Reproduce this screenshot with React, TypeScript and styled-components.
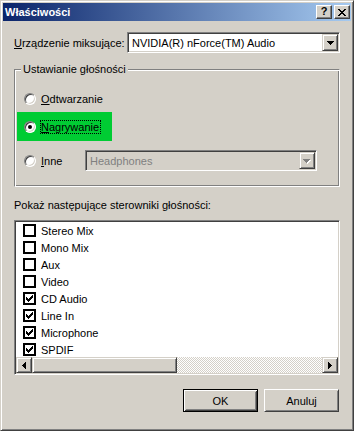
import styled, { createGlobalStyle } from "styled-components";
import type { ReactElement } from "react";

const GlobalStyle = createGlobalStyle`
    html, body {
        margin: 0;
        padding: 0;
        background: #d4d0c8;
    }
    body {
        font-family: "Liberation Sans", Arial, sans-serif;
        font-size: 11px;
        color: #000;
    }
`;

const CHECK = ["......#", ".....##", "#...###", "##.###.", "#####..", ".###...", "..#...."];
const CLOSE = ["##....##", ".##..##.", "..####..", "...##...", "..####..", ".##..##.", "##....##"];
const ARROW_DOWN = ["#######", ".#####.", "..###..", "...#..."];
const ARROW_LEFT = ["...#", "..##", ".###", "####", ".###", "..##", "...#"];
const ARROW_RIGHT = ["#...", "##..", "###.", "####", "###.", "##..", "#..."];

const PixelIcon = (props: { rows: string[]; color?: string; shadow?: string }) => {
    const { rows, color = "#000", shadow } = props;
    const w = rows[0].length + (shadow ? 1 : 0);
    const h = rows.length + (shadow ? 1 : 0);
    const cells: ReactElement[] = [];
    if (shadow) {
        rows.forEach((row, y) => {
            row.split("").forEach((c, x) => {
                if (c === "#") cells.push(<rect key={`s${x}-${y}`} x={x + 1} y={y + 1} width={1} height={1} fill={shadow} />);
            });
        });
    }
    rows.forEach((row, y) => {
        row.split("").forEach((c, x) => {
            if (c === "#") cells.push(<rect key={`${x}-${y}`} x={x} y={y} width={1} height={1} fill={color} />);
        });
    });
    return (
        <svg width={w} height={h} viewBox={`0 0 ${w} ${h}`} shapeRendering="crispEdges" style={{ display: "block" }}>
            {cells}
        </svg>
    );
};

const channels = [
    { name: "Stereo Mix", checked: false },
    { name: "Mono Mix", checked: false },
    { name: "Aux", checked: false },
    { name: "Video", checked: false },
    { name: "CD Audio", checked: true },
    { name: "Line In", checked: true },
    { name: "Microphone", checked: true },
    { name: "SPDIF", checked: true },
];

const App = () => {
    return (
        <>
            <GlobalStyle />
            <Window>
                <TitleBar>
                    <TitleText>Właściwości</TitleText>
                    <CaptionButton>
                        <HelpGlyph>?</HelpGlyph>
                    </CaptionButton>
                    <CaptionButton>
                        <PixelIcon rows={CLOSE} />
                    </CaptionButton>
                </TitleBar>

                <Content>
                    <DeviceRow>
                        <DeviceLabel><u>U</u>rządzenie miksujące:</DeviceLabel>
                        <ComboBox $width={213}>
                            <ComboText>NVIDIA(R) nForce(TM) Audio</ComboText>
                            <DropButton>
                                <PixelIcon rows={ARROW_DOWN} />
                            </DropButton>
                        </ComboBox>
                    </DeviceRow>

                    <GroupBox>
                        <Legend>Ustawianie głośności</Legend>
                        <RadioRow $height={17}>
                            <Radio />
                            <RadioLabel><u>O</u>dtwarzanie</RadioLabel>
                        </RadioRow>
                        <RadioRow $height={29} $highlight>
                            <Radio $checked />
                            <RadioLabel $focused><u>N</u>agrywanie</RadioLabel>
                        </RadioRow>
                        <RadioRow $height={21} $spaced>
                            <Radio />
                            <RadioLabel $width={45}><u>I</u>nne</RadioLabel>
                            <ComboBox $width={232} $disabled>
                                <ComboText>Headphones</ComboText>
                                <DropButton>
                                    <PixelIcon rows={ARROW_DOWN} color="#808080" shadow="#fff" />
                                </DropButton>
                            </ComboBox>
                        </RadioRow>
                    </GroupBox>

                    <ListCaption>Pokaż następujące sterowniki głośności:</ListCaption>

                    <ListBox>
                        <ListItems>
                            {channels.map((ch) => (
                                <ListItem key={ch.name}>
                                    <CheckBox>{ch.checked && <PixelIcon rows={CHECK} />}</CheckBox>
                                    <span>{ch.name}</span>
                                </ListItem>
                            ))}
                        </ListItems>
                        <ScrollBar>
                            <ScrollButton>
                                <PixelIcon rows={ARROW_LEFT} />
                            </ScrollButton>
                            <ScrollThumb />
                            <ScrollTrack />
                            <ScrollButton>
                                <PixelIcon rows={ARROW_RIGHT} />
                            </ScrollButton>
                        </ScrollBar>
                    </ListBox>

                    <ButtonRow>
                        <PushButton $default>OK</PushButton>
                        <PushButton>Anuluj</PushButton>
                    </ButtonRow>
                </Content>
            </Window>
        </>
    );
};

export default App;

const raised = `
    box-sizing: border-box;
    background: #d4d0c8;
    border: 1px solid;
    border-color: #d4d0c8 #404040 #404040 #d4d0c8;
    box-shadow: inset 1px 1px #fff, inset -1px -1px #808080;
`;

const sunken = `
    box-sizing: border-box;
    border: 1px solid;
    border-color: #808080 #fff #fff #808080;
    box-shadow: inset 1px 1px #404040, inset -1px -1px #d4d0c8;
`;

const Window = styled.div`
    ${raised}
    width: 354px;
    height: 431px;
    padding: 2px;
    display: flex;
    flex-direction: column;
    overflow: hidden;
`;

const TitleBar = styled.div`
    height: 18px;
    flex-shrink: 0;
    display: flex;
    align-items: center;
    gap: 2px;
    padding: 0 1px 0 2px;
    background: linear-gradient(to right, #0a246a, #a6caf0);
`;

const TitleText = styled.div`
    flex: 1;
    color: #fff;
    font-weight: bold;
    font-size: 11px;
    line-height: 13px;
    white-space: nowrap;
`;

const CaptionButton = styled.div`
    width: 16px;
    height: 14px;
    box-sizing: border-box;
    background: #d4d0c8;
    border: 1px solid;
    border-color: #fff #404040 #404040 #fff;
    box-shadow: inset -1px -1px #808080;
    display: flex;
    align-items: center;
    justify-content: center;
`;

const HelpGlyph = styled.span`
    font-weight: bold;
    font-size: 11px;
    line-height: 11px;
    margin-top: -1px;
`;

const Content = styled.div`
    flex: 1;
    display: flex;
    flex-direction: column;
    padding: 11px 11px 16px 11px;
`;

const DeviceRow = styled.div`
    display: flex;
    align-items: center;
    height: 21px;
`;

const DeviceLabel = styled.div`
    width: 113px;
    white-space: nowrap;
`;

const ComboBox = styled.div<{ $width: number; $disabled?: boolean }>`
    ${sunken}
    width: ${(p) => p.$width}px;
    height: 21px;
    padding: 1px;
    background: ${(p) => (p.$disabled ? "#d4d0c8" : "#fff")};
    color: ${(p) => (p.$disabled ? "#808080" : "#000")};
    display: flex;
    align-items: center;
`;

const ComboText = styled.div`
    flex: 1;
    padding-left: 3px;
    white-space: nowrap;
    overflow: hidden;
`;

const DropButton = styled.div`
    ${raised}
    width: 16px;
    height: 17px;
    display: flex;
    align-items: center;
    justify-content: center;
    padding-top: 1px;
`;

const GroupBox = styled.div`
    position: relative;
    margin-top: 16px;
    border: 1px solid;
    border-color: #808080 #fff #fff #808080;
    box-shadow: inset 1px 1px #fff, inset -1px -1px #808080;
    padding: 20px 2px 15px 2px;
    display: flex;
    flex-direction: column;
    gap: 5px;
`;

const Legend = styled.div`
    position: absolute;
    top: -7px;
    left: 6px;
    padding: 0 2px;
    line-height: 13px;
    background: #d4d0c8;
    white-space: nowrap;
`;

const RadioRow = styled.div<{ $height: number; $highlight?: boolean; $spaced?: boolean }>`
    height: ${(p) => p.$height}px;
    width: ${(p) => (p.$highlight ? "95px" : "auto")};
    margin-top: ${(p) => (p.$spaced ? "4px" : "0")};
    background: ${(p) => (p.$highlight ? "#00cc33" : "transparent")};
    display: flex;
    align-items: center;
    padding-left: 7px;
    box-sizing: border-box;
`;

const Radio = styled.div<{ $checked?: boolean }>`
    ${sunken}
    width: 12px;
    height: 12px;
    border-radius: 50%;
    background: #fff;
    flex-shrink: 0;
    margin-right: 4px;
    display: flex;
    align-items: center;
    justify-content: center;
    &::after {
        content: "";
        display: ${(p) => (p.$checked ? "block" : "none")};
        width: 4px;
        height: 4px;
        border-radius: 50%;
        background: #000;
    }
`;

const RadioLabel = styled.div<{ $focused?: boolean; $width?: number }>`
    border: 1px dotted ${(p) => (p.$focused ? "#000" : "transparent")};
    line-height: 12px;
    padding-right: 1px;
    white-space: nowrap;
    width: ${(p) => (p.$width ? `${p.$width}px` : "auto")};
    box-sizing: border-box;
`;

const ListCaption = styled.div`
    margin-top: 12px;
    line-height: 13px;
    white-space: nowrap;
`;

const ListBox = styled.div`
    ${sunken}
    margin-top: 8px;
    height: 155px;
    padding: 1px;
    display: flex;
    flex-direction: column;
`;

const ListItems = styled.div`
    flex: 1;
    background: #fff;
    overflow: hidden;
`;

const ListItem = styled.div`
    height: 17px;
    display: flex;
    align-items: center;
    gap: 5px;
    padding-left: 7px;
    white-space: nowrap;
`;

const CheckBox = styled.div`
    width: 13px;
    height: 13px;
    box-sizing: border-box;
    border: 2px solid #000;
    background: #fff;
    display: flex;
    align-items: center;
    justify-content: center;
`;

const ScrollBar = styled.div`
    height: 16px;
    flex-shrink: 0;
    display: flex;
`;

const ScrollButton = styled.div`
    ${raised}
    width: 16px;
    height: 16px;
    display: flex;
    align-items: center;
    justify-content: center;
`;

const ScrollThumb = styled.div`
    ${raised}
    width: 145px;
    height: 16px;
`;

const ScrollTrack = styled.div`
    flex: 1;
    background: repeating-conic-gradient(#fff 0 25%, #d4d0c8 0 50%) 0 0 / 2px 2px;
`;

const ButtonRow = styled.div`
    margin-top: 14px;
    display: flex;
    justify-content: flex-end;
    gap: 6px;
    padding-right: 1px;
`;

const PushButton = styled.div<{ $default?: boolean }>`
    width: 75px;
    height: 23px;
    box-sizing: border-box;
    background: #d4d0c8;
    display: flex;
    align-items: center;
    justify-content: center;
    border: 1px solid;
    border-color: ${(p) => (p.$default ? "#000" : "#fff #404040 #404040 #fff")};
    box-shadow: ${(p) =>
        p.$default
            ? "inset 1px 1px #fff, inset -1px -1px #404040, inset 2px 2px #d4d0c8, inset -2px -2px #808080"
            : "inset 1px 1px #d4d0c8, inset -1px -1px #808080"};
`;
